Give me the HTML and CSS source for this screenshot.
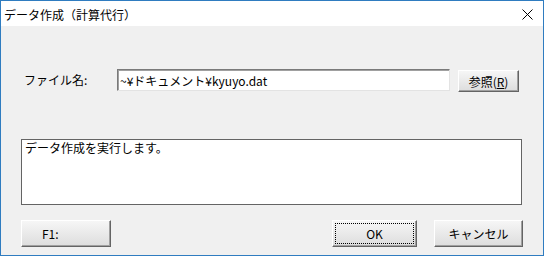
FILE: index.html
```html
<!DOCTYPE html>
<html lang="ja">
<head>
    <meta charset="UTF-8">
    <title>データ作成（計算代行）</title>
    <link rel="stylesheet" href="styles.css">
</head>
<body>
    <div class="window">
        <div class="titlebar">
            <span class="title">データ作成（計算代行）</span>
            <svg class="close" width="11" height="11" viewBox="0 0 11 11">
                <path d="M0.5 0.5 L10.5 10.5 M10.5 0.5 L0.5 10.5" stroke="#000" stroke-width="1" fill="none"/>
            </svg>
        </div>
        <div class="client">
            <div class="file-row">
                <label class="file-label" for="fileName">ファイル名:</label>
                <input type="text" id="fileName" class="field" value="~¥ドキュメント¥kyuyo.dat">
                <button class="btn btn-browse">参照(<u>R</u>)</button>
            </div>
            <div class="message">データ作成を実行します。</div>
            <div class="button-row">
                <button class="btn btn-f1">F1:</button>
                <div class="spacer"></div>
                <button class="btn btn-ok"><span class="focus">OK</span></button>
                <button class="btn btn-cancel">キャンセル</button>
            </div>
        </div>
    </div>
</body>
</html>
```

FILE: styles.css
```css
body {
    margin: 0;
    font-family: "Noto Sans CJK JP", "DejaVu Sans", sans-serif;
    font-size: 12px;
    color: #000;
}
.window {
    width: 544px;
    height: 256px;
    box-sizing: border-box;
    border: 1px solid #2f7cc0;
    display: flex;
    flex-direction: column;
    background: #f0f0f0;
}
.titlebar {
    height: 25px;
    background: #fff;
    display: flex;
    align-items: center;
    padding-left: 3px;
    padding-right: 10px;
}
.title {
    flex: 1;
    font-size: 12px;
    margin-top: 1px;
}
.close {
    margin-top: 1px;
}
.client {
    flex: 1;
    padding: 43px 0 0 20px;
}
.file-row {
    display: flex;
    align-items: flex-start;
}
.file-label {
    width: 93px;
    padding-left: 3px;
    margin-top: 2px;
}
.field {
    width: 333px;
    height: 22px;
    box-sizing: border-box;
    margin: 0;
    padding: 0 2px;
    font: inherit;
    border-style: solid;
    border-width: 1px;
    border-color: #7a7a7a #e3e3e3 #e3e3e3 #7a7a7a;
    box-shadow: inset 1px 1px 0 #a0a0a0;
    background: #fff;
    outline: none;
}
.btn {
    font: inherit;
    margin: 0;
    padding: 0;
    color: #000;
    box-sizing: border-box;
    border-style: solid;
    border-width: 1px;
    border-color: #fff #646464 #646464 #fff;
    box-shadow: inset -1px -1px 0 #a0a0a0;
    background: linear-gradient(#f6f6f6, #dddddd);
}
.btn-browse {
    width: 61px;
    height: 22px;
    margin-left: 8px;
    margin-top: 1px;
}
.message {
    width: 501px;
    height: 66px;
    box-sizing: border-box;
    margin-top: 47px;
    border: 1px solid #646464;
    background: #fff;
    padding: 0 3px;
    line-height: 16px;
}
.button-row {
    display: flex;
    margin-top: 15px;
    width: 502px;
}
.button-row .btn {
    height: 27px;
}
.btn-f1 {
    width: 90px;
    text-align: left;
    padding-left: 20px;
}
.spacer {
    flex: 1;
}
.btn-ok {
    width: 85px;
    padding: 2px;
}
.focus {
    display: flex;
    align-items: center;
    justify-content: center;
    height: 100%;
    border: 1px dotted #000;
    box-sizing: border-box;
}
.btn-cancel {
    width: 89px;
    margin-left: 17px;
}
```
